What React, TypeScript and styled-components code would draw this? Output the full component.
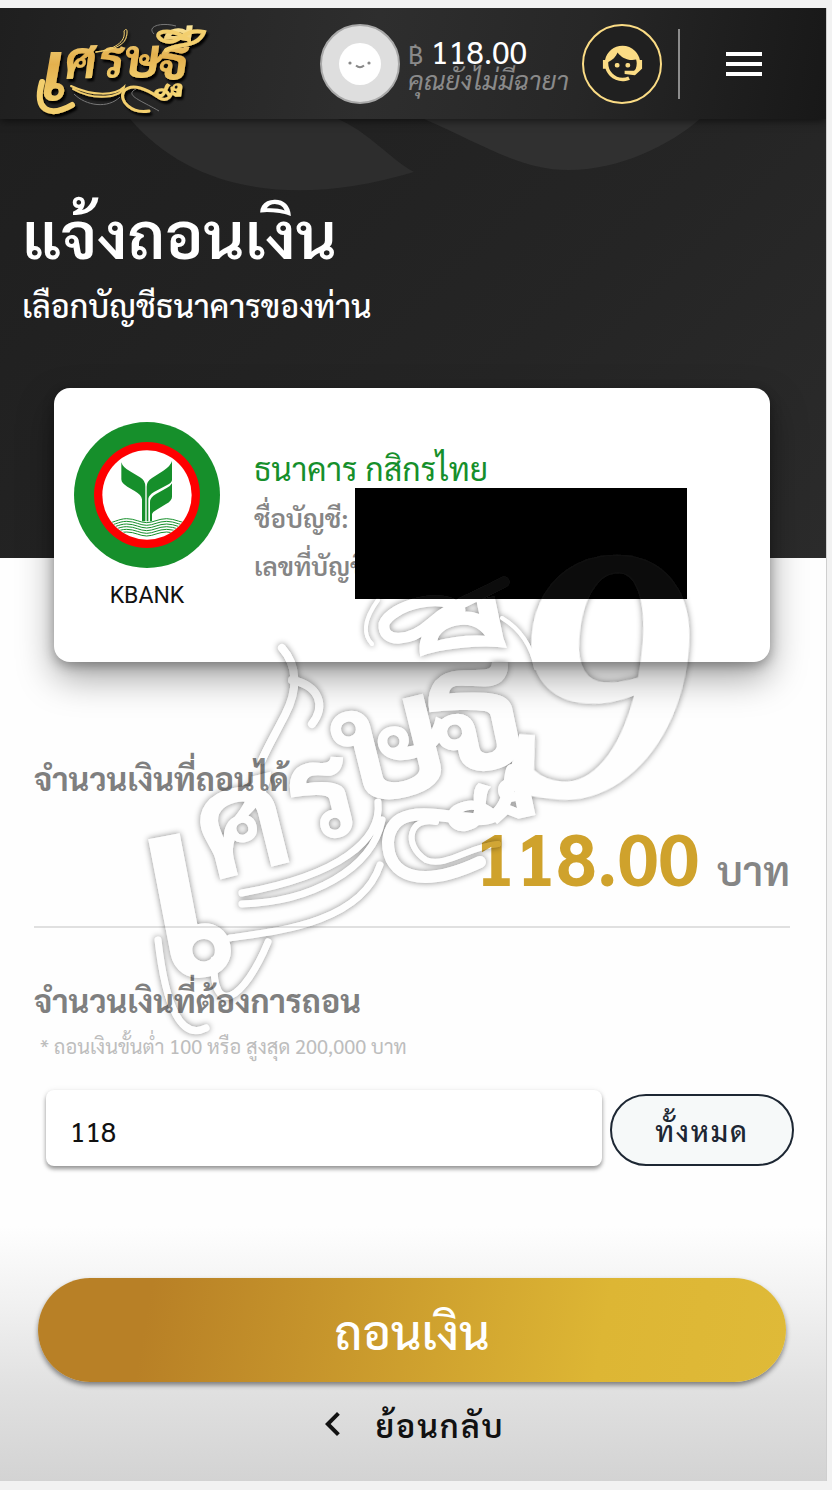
import React, { useState } from "react";
import styled, { createGlobalStyle } from "styled-components";

const GlobalStyle = createGlobalStyle`
  * { box-sizing: border-box; }
  body {
    margin: 0;
    background: #f2f2f2;
    font-family: "Sarabun", "Noto Sans", "Noto Sans Thai", sans-serif;
    color: #111;
  }
  h1, h2, p { margin: 0; }
  button, input { font: inherit; }
`;

const Page = styled.div`
  position: relative;
  margin: 8px 5px 9px 0;
  border-right: 1px solid #cfcfcf;
  background: #fefefe;
  overflow: hidden;
`;

const Header = styled.header`
  position: relative;
  z-index: 1;
  display: flex;
  align-items: center;
  height: 111px;
  padding: 0 58px 0 32px;
  background: linear-gradient(100deg, #1f1f1f 0%, #2e2e2e 45%, #272727 70%, #181818 100%);
  box-shadow: 0 2px 8px rgba(0, 0, 0, 0.55);
`;

const LogoLink = styled.a`
  display: block;
  margin-right: auto;
  line-height: 0;
`;

const LogoArt = styled.svg`
  overflow: visible;
`;

const Avatar = styled.span`
  display: grid;
  place-items: center;
  width: 80px;
  height: 80px;
  border: 2px solid #a9a9a9;
  border-radius: 50%;
  background: #dedede;
`;

const Account = styled.div`
  width: 160px;
  margin: 0 14px 0 8px;
  white-space: nowrap;
`;

const Balance = styled.p`
  font-size: 32px;
  line-height: 28px;
  color: #fff;
`;

const Currency = styled.span`
  font-size: 26px;
  color: #8a8a8a;
`;

const Nickname = styled.p`
  font-size: 26px;
  line-height: 24px;
  font-style: italic;
  color: #8a8a8a;
`;

const SupportButton = styled.button`
  display: grid;
  place-items: center;
  width: 80px;
  height: 80px;
  padding: 0;
  border: 2px solid #fbdc85;
  border-radius: 50%;
  background: #202020;
  color: #fbdc85;
`;

const HeaderRule = styled.span`
  width: 2px;
  height: 70px;
  margin: 0 40px 0 16px;
  background: #8c8c8c;
`;

const MenuButton = styled.button`
  padding: 0;
  border: 0;
  background: none;
  color: #fff;
  line-height: 0;
`;

const Hero = styled.section`
  position: relative;
  height: 439px;
  padding: 70px 22px 0;
  background: linear-gradient(135deg, #1f1f1f, #252525 60%, #2b2b2b);
  color: #fff;
`;

const HeroShapes = styled.svg`
  position: absolute;
  top: 0;
  left: 0;
`;

const Title = styled.h1`
  position: relative;
  font-size: 64px;
  line-height: 88px;
  font-weight: 600;
`;

const Subtitle = styled.p`
  position: relative;
  font-size: 32px;
  line-height: 56px;
  font-weight: 500;
`;

const BankCard = styled.section`
  position: relative;
  display: flex;
  align-items: flex-start;
  gap: 34px;
  height: 274px;
  margin: -170px 56px 0 54px;
  padding: 34px 20px 0;
  border-radius: 16px;
  background: #fff;
  box-shadow: 0 16px 36px rgba(0, 0, 0, 0.36), 0 4px 12px rgba(0, 0, 0, 0.3);
`;

const BankBadge = styled.figure`
  width: 146px;
  margin: 0;
  text-align: center;
  line-height: 0;
`;

const BankCode = styled.figcaption`
  padding-top: 12px;
  font-family: Roboto, sans-serif;
  font-size: 23px;
  line-height: 32px;
  color: #111;
`;

const BankInfo = styled.div`
  position: relative;
  padding-top: 21px;
  white-space: nowrap;
`;

const BankName = styled.h2`
  font-size: 32px;
  line-height: 50px;
  font-weight: 400;
  color: #168f2b;
`;

const BankLine = styled.p`
  font-size: 26px;
  line-height: 48px;
  font-weight: 600;
  color: #858585;
`;

const Redaction = styled.span`
  position: absolute;
  top: 66px;
  left: 101px;
  width: 332px;
  height: 111px;
  background: #000;
`;

const Form = styled.form`
  padding: 88px 36px 0 34px;
`;

const SectionLabel = styled.label`
  display: block;
  font-size: 32px;
  line-height: 56px;
  font-weight: 700;
  color: #7f7f7f;
`;

const AmountRow = styled.p`
  display: flex;
  justify-content: flex-end;
  align-items: baseline;
  gap: 18px;
  height: 122px;
  padding-top: 2px;
  border-bottom: 2px solid #e0e0e0;
  line-height: 96px;
`;

const Amount = styled.output`
  font-size: 72px;
  font-weight: 700;
  color: #cfa22c;
`;

const Unit = styled.span`
  font-size: 40px;
  font-weight: 600;
  color: #858585;
`;

const RequestLabel = styled(SectionLabel)`
  margin-top: 44px;
`;

const Hint = styled.p`
  padding-left: 6px;
  font-size: 20px;
  line-height: 36px;
  color: #bdbdbd;
`;

const EntryRow = styled.div`
  display: flex;
  align-items: center;
  gap: 8px;
  margin: 26px -4px 0 12px;
`;

const AmountInput = styled.input`
  flex: 1;
  min-width: 0;
  height: 76px;
  padding: 4px 24px 0;
  border: 0;
  border-radius: 8px;
  background: #fff;
  box-shadow: 0 3px 4px rgba(0, 0, 0, 0.4), 0 0 6px rgba(0, 0, 0, 0.06);
  font-size: 28px;
  color: #111;
`;

const AllButton = styled.button`
  width: 184px;
  height: 72px;
  margin-top: 4px;
  padding: 0;
  border: 2px solid #1d2733;
  border-radius: 36px;
  background: #f6f9f9;
  font-size: 28px;
  font-weight: 500;
  letter-spacing: 2px;
  color: #1d2733;
`;

const Footer = styled.footer`
  display: flex;
  flex-direction: column;
  align-items: center;
  height: 255px;
  margin-top: 60px;
  padding: 52px 40px 0 38px;
  background: linear-gradient(180deg, #fefefe 0%, #f2f2f2 28%, #e0e0e0 65%, #d3d3d3 100%);
`;

const SubmitButton = styled.button`
  width: 100%;
  height: 104px;
  padding: 0;
  border: 0;
  border-radius: 52px;
  background: linear-gradient(100deg, #b88026 15%, #ddb634 75%, #dfba38 100%);
  box-shadow: 0 3px 5px rgba(0, 0, 0, 0.45);
  font-size: 48px;
  font-weight: 500;
  color: #fff;
`;

const BackLink = styled.a`
  display: flex;
  align-items: center;
  gap: 18px;
  height: 84px;
  padding-right: 10px;
  font-size: 32px;
  font-weight: 600;
  letter-spacing: 2px;
  color: #111;
  text-decoration: none;
`;

const Watermark = styled.svg`
  position: absolute;
  top: 532px;
  left: 120px;
  overflow: visible;
  pointer-events: none;
`;

type Glyph = { ch: string; x: number; y: number; size: number; turn: number };

const Glyphs = ({ items }: { items: Glyph[] }) => (
  <>
    {items.map((g) => (
      <text key={g.ch} fontSize={g.size} fontWeight={700} transform={`translate(${g.x} ${g.y}) rotate(${g.turn})`}>
        {g.ch}
      </text>
    ))}
  </>
);

const logoGlyphs: Glyph[] = [
  { ch: "เ", x: 8, y: 86, size: 84, turn: 0 },
  { ch: "ศ", x: 33, y: 65, size: 52, turn: -2 },
  { ch: "ร", x: 67, y: 64, size: 52, turn: -2 },
  { ch: "ษ", x: 92, y: 64, size: 54, turn: -2 },
  { ch: "ฐี", x: 126, y: 66, size: 56, turn: -2 },
];

const Logo = () => (
  <LogoArt width="180" height="100" viewBox="0 0 180 100" role="img" aria-label="เศรษฐี">
    <defs>
      <linearGradient id="gold" x1="0" y1="0" x2="0" y2="1">
        <stop offset="0" stopColor="#fff0a8" />
        <stop offset="0.5" stopColor="#e3b04e" />
        <stop offset="1" stopColor="#f8dc7a" />
      </linearGradient>
      <filter id="drop" x="-10%" y="-10%" width="125%" height="125%">
        <feDropShadow dx="2" dy="3" stdDeviation="1" floodColor="#000" />
      </filter>
    </defs>
    <g filter="url(#drop)" fill="url(#gold)">
      <g fontStyle="italic">
        <Glyphs items={logoGlyphs} />
      </g>
      <g fill="none" stroke="#f3cf6e" strokeLinecap="round">
        <path d="M10 68C2 96 17 104 40 91" strokeWidth="6" />
        <path d="M39 72C60 82 83 82 92 73C90 84 62 87 41 75" strokeWidth="2" />
        <path d="M64 38C83 35 94 28 92 17C95 13 96 17 94 24C91 33 76 37 64 38" strokeWidth="1" />
        <path d="M117 97C100 100 86 87 92 77C100 68 116 76 126 83C135 90 142 80 140 74" strokeWidth="3" />
        <path d="M157 26C136 11 118 19 130 26C147 34 150 13 172 18C166 34 146 29 134 36" strokeWidth="4" />
      </g>
    </g>
    <path
      d="M42 80C54 92 76 95 88 83M104 75C92 81 108 86 127 97M122 20C114 12 130 8 144 12"
      fill="none"
      stroke="#777"
      strokeWidth="1"
    />
  </LogoArt>
);

const markGlyphs: Glyph[] = [
  { ch: "เ", x: 38, y: 444, size: 250, turn: -11 },
  { ch: "ศ", x: 90, y: 342, size: 146, turn: -14 },
  { ch: "ร", x: 180, y: 306, size: 134, turn: -14 },
  { ch: "ษ", x: 228, y: 270, size: 164, turn: -14 },
  { ch: "ฐี", x: 318, y: 240, size: 176, turn: -12 },
];

const WatermarkArt = () => (
  <Watermark width="590" height="500" viewBox="0 0 590 500" aria-hidden="true">
    <defs>
      <filter id="emboss" x="-5%" y="-5%" width="110%" height="110%">
        <feGaussianBlur in="SourceAlpha" stdDeviation="3" result="blur" />
        <feFlood floodColor="#000" floodOpacity="0.46" />
        <feComposite in2="blur" operator="in" />
        <feComposite in2="SourceAlpha" operator="out" result="glow" />
        <feComponentTransfer in="SourceGraphic" result="face">
          <feFuncA type="linear" slope="0.05" />
        </feComponentTransfer>
        <feMerge>
          <feMergeNode in="glow" />
          <feMergeNode in="face" />
        </feMerge>
      </filter>
    </defs>
    <g filter="url(#emboss)" fill="#fff">
      <Glyphs items={markGlyphs} />
      <text
        fontFamily="Liberation Serif"
        fontSize="370"
        fontStyle="italic"
        fontWeight="700"
        transform="translate(380 252) rotate(4)"
      >
        9
      </text>
      <g fill="none" stroke="#fff" strokeLinecap="round">
        <path d="M38 400C46 470 62 500 86 488M94 420C92 480 124 460 148 402" strokeWidth="7" />
        <path d="M122 353C220 335 262 300 258 262M262 280C252 330 190 362 122 364M260 325C240 385 150 392 110 398" strokeWidth="7" />
        <path d="M162 108C178 126 178 150 165 175C152 200 146 210 142 220M172 140C200 146 206 166 192 184" strokeWidth="8" />
        <path d="M360 322C300 350 268 336 268 302C272 250 350 290 374 276C392 262 388 240 392 230" strokeWidth="12" />
        <path d="M316 282C290 276 282 304 306 320C326 328 350 306 378 304" strokeWidth="6" />
        <path d="M340 70C325 50 270 66 264 84C262 104 290 102 310 84C330 66 350 60 384 42" strokeWidth="11" />
        <path d="M258 60C242 82 244 96 252 104M382 78C402 90 412 108 416 128" strokeWidth="4" />
      </g>
    </g>
  </Watermark>
);

const BankLogo = () => (
  <svg width="146" height="146" viewBox="72 126 438 438" role="img" aria-label="KBANK">
    <defs>
      <clipPath id="disc">
        <circle cx="291" cy="345" r="133" />
      </clipPath>
    </defs>
    <circle cx="291" cy="345" r="219" fill="#168f2b" />
    <circle cx="291" cy="345" r="159" fill="#fe0000" />
    <circle cx="291" cy="345" r="134" fill="#fff" />
    <g fill="#168f2b">
      <path d="M214 247Q218 262 240 274L270 292Q286 301 286 320V424H276V358Q274 344 254 333L232 320Q214 310 214 298Z" />
      <path d="M366 243Q362 258 340 272L306 294Q290 304 290 320V424H295V356Q297 345 312 336L350 316Q366 308 366 300Z" />
      <path d="M366 310Q362 318 350 324L318 342Q300 352 300 366V424H306V402Q308 395 320 389L348 372Q366 362 366 350Z" />
    </g>
    <g clipPath="url(#disc)" fill="none" stroke="#168f2b" strokeWidth="3">
      {[424, 432, 440, 448, 456, 464].map((y) => (
        <path
          key={y}
          d={`M160 ${y + 8}C190 ${y + 6} 205 ${y - 8} 230 ${y - 8}S270 ${y + 4} 290 ${y + 4}S325 ${y - 8} 350 ${y - 8}S395 ${y + 6} 424 ${y + 8}`}
        />
      ))}
    </g>
  </svg>
);

const AgentIcon = () => (
  <svg width="47" height="47" viewBox="0 0 24 24" fill="currentColor" aria-hidden="true">
    <path d="M18.72,14.76C19.07,13.91 19.26,13 19.26,12C19.26,11.28 19.15,10.59 18.96,9.95C18.31,10.1 17.63,10.18 16.92,10.18C13.86,10.18 11.15,8.67 9.5,6.34C8.61,8.5 6.91,10.26 4.77,11.22C4.73,11.47 4.73,11.74 4.73,12A7.27,7.27 0 0,0 12,19.27C13.05,19.27 14.06,19.04 14.97,18.63C15.54,19.72 15.8,20.26 15.78,20.26C14.14,20.81 12.87,21.08 12,21.08C9.58,21.08 7.27,20.13 5.57,18.42C4.53,17.38 3.76,16.11 3.33,14.73H2V10.18H3.09C3.93,6.04 7.6,2.92 12,2.92C14.4,2.92 16.71,3.87 18.42,5.58C19.69,6.84 20.54,8.45 20.89,10.18H22V14.73H21.94L18.38,18L13.08,17.4V15.73H17.91L18.72,14.76M9.27,11.77A1.14,1.14 0 1,1 9.27,14.04A1.14,1.14 0 1,1 9.27,11.77M14.72,11.77A1.14,1.14 0 1,1 14.72,14.04A1.14,1.14 0 1,1 14.72,11.77Z" />
  </svg>
);

const FaceIcon = () => (
  <svg width="44" height="44" viewBox="0 0 44 44" aria-hidden="true">
    <circle cx="22" cy="22" r="21" fill="#fff" />
    <circle cx="12" cy="21" r="1.6" fill="#888" />
    <circle cx="31" cy="21" r="1.6" fill="#888" />
    <path d="M18 23.500Q22 27 26 23.500" fill="none" stroke="#888" strokeWidth="2" />
  </svg>
);

export default function App() {
  const [amount, setAmount] = useState("118");
  return (
    <>
      <GlobalStyle />
      <Page>
        <Header>
          <LogoLink href="#home">
            <Logo />
          </LogoLink>
          <Avatar>
            <FaceIcon />
          </Avatar>
          <Account>
            <Balance>
              <Currency>฿</Currency> 118.00
            </Balance>
            <Nickname>คุณยังไม่มีฉายา</Nickname>
          </Account>
          <SupportButton type="button" aria-label="ติดต่อเจ้าหน้าที่">
            <AgentIcon />
          </SupportButton>
          <HeaderRule />
          <MenuButton type="button" aria-label="เมนู">
            <svg width="48" height="48" viewBox="0 0 24 24" fill="currentColor">
              <path d="M3,6H21V8H3V6M3,11H21V13H3V11M3,16H21V18H3V16Z" />
            </svg>
          </MenuButton>
        </Header>
        <Hero>
          <HeroShapes width="720" height="80" viewBox="0 0 720 80" aria-hidden="true">
            <path d="M130 0C190 70 290 90 414 53C390 40 370 14 338 0Z" fill="#2d2d2d" />
            <path d="M424 0C480 24 520 51 568 51C620 51 670 26 700 0Z" fill="#303030" />
          </HeroShapes>
          <Title>แจ้งถอนเงิน</Title>
          <Subtitle>เลือกบัญชีธนาคารของท่าน</Subtitle>
        </Hero>
        <BankCard>
          <BankBadge>
            <BankLogo />
            <BankCode>KBANK</BankCode>
          </BankBadge>
          <BankInfo>
            <BankName>ธนาคาร กสิกรไทย</BankName>
            <BankLine>ชื่อบัญชี:</BankLine>
            <BankLine>เลขที่บัญชี:</BankLine>
            <Redaction />
          </BankInfo>
        </BankCard>
        <Form id="withdraw" onSubmit={(e) => e.preventDefault()}>
          <SectionLabel htmlFor="available">จำนวนเงินที่ถอนได้</SectionLabel>
          <AmountRow>
            <Amount id="available">118.00</Amount>
            <Unit>บาท</Unit>
          </AmountRow>
          <RequestLabel htmlFor="amount">จำนวนเงินที่ต้องการถอน</RequestLabel>
          <Hint>* ถอนเงินขั้นต่ำ 100 หรือ สูงสุด 200,000 บาท</Hint>
          <EntryRow>
            <AmountInput id="amount" inputMode="numeric" value={amount} onChange={(e) => setAmount(e.target.value)} />
            <AllButton type="button" onClick={() => setAmount("118")}>
              ทั้งหมด
            </AllButton>
          </EntryRow>
        </Form>
        <Footer>
          <SubmitButton type="submit" form="withdraw">
            ถอนเงิน
          </SubmitButton>
          <BackLink href="#back">
            <svg width="48" height="48" viewBox="0 0 24 24" fill="currentColor" aria-hidden="true">
              <path d="M15.41,16.58L10.83,12L15.41,7.41L14,6L8,12L14,18L15.41,16.58Z" />
            </svg>
            ย้อนกลับ
          </BackLink>
        </Footer>
        <WatermarkArt />
      </Page>
    </>
  );
}
